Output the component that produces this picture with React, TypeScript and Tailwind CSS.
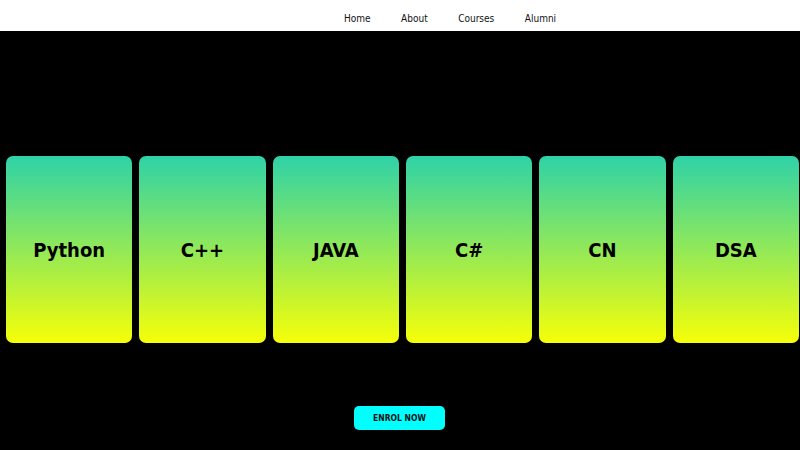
const courses = ['Python', 'C++', 'JAVA', 'C#', 'CN', 'DSA']

const navLinks = ['Home', 'About', 'Courses', 'Alumni']

function App() {
  return (
    <div className="w-[800px] h-[450px] bg-black overflow-hidden font-['DejaVu_Sans_Condensed','DejaVu_Sans',sans-serif]">
      <nav className="h-[31px] bg-white flex items-center pl-[344px] gap-[30.5px] text-[10px] text-[#111]">
        {navLinks.map(link => (
          <a key={link} href="#" className="leading-none pt-[6px]">
            {link}
          </a>
        ))}
      </nav>

      <section className="flex pl-[6px] pr-[1px] gap-[7px] pt-[125px]">
        {courses.map(course => (
          <div
            key={course}
            className="flex-1 h-[187px] rounded-[7px] bg-[linear-gradient(to_bottom,#2ed2a8,#f6ff08)] flex items-center justify-center"
          >
            <span className="text-[20px] font-bold text-black">{course}</span>
          </div>
        ))}
      </section>

      <div className="flex justify-center pt-[63px]">
        <button className="w-[91px] h-[24px] rounded-[5px] bg-[#00ffff] text-[8.5px] font-bold text-[#111] mr-[1px]">
          ENROL NOW
        </button>
      </div>
    </div>
  )
}

export default App
